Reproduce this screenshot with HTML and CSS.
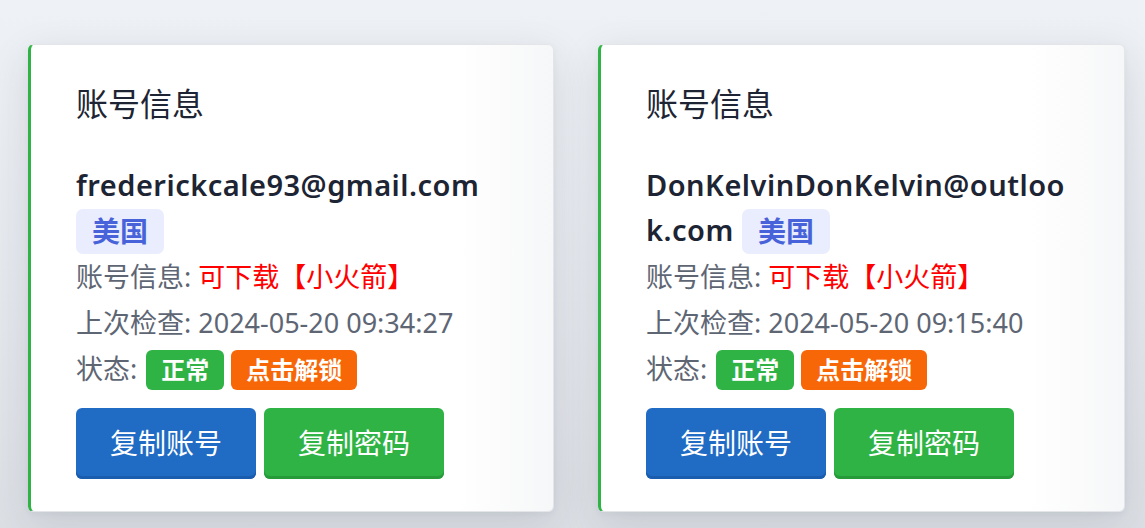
FILE: index.html
```html
<!DOCTYPE html>
<html lang="zh-CN">
<head>
<meta charset="utf-8">
<title>账号信息</title>
<link rel="stylesheet" href="styles.css">
</head>
<body>
<main class="grid">
  <section class="card">
    <h2 class="card-title">账号信息</h2>
    <p class="email">frederickcale93@gmail.com <span class="region">美国</span></p>
    <p class="row">账号信息: <span class="red">可下载【小火箭】</span></p>
    <p class="row">上次检查: 2024-05-20 09:34:27</p>
    <p class="row">状态: <span class="tag tag-green">正常</span> <span class="tag tag-orange">点击解锁</span></p>
    <div class="actions">
      <button class="btn btn-blue">复制账号</button>
      <button class="btn btn-green">复制密码</button>
    </div>
  </section>
  <section class="card">
    <h2 class="card-title">账号信息</h2>
    <p class="email">DonKelvinDonKelvin@outlook.com <span class="region">美国</span></p>
    <p class="row">账号信息: <span class="red">可下载【小火箭】</span></p>
    <p class="row">上次检查: 2024-05-20 09:15:40</p>
    <p class="row">状态: <span class="tag tag-green">正常</span> <span class="tag tag-orange">点击解锁</span></p>
    <div class="actions">
      <button class="btn btn-blue">复制账号</button>
      <button class="btn btn-green">复制密码</button>
    </div>
  </section>
</main>
</body>
</html>
```
FILE: styles.css
```css
* { box-sizing: border-box; }
html, body { height: 100%; }
body {
  margin: 0;
  font-family: "Noto Sans", "Noto Sans CJK SC", sans-serif;
  background: linear-gradient(180deg, #eef1f5 0%, #e4e7ec 60%, #dcdfe4 100%);
  overflow: hidden;
}
.grid {
  display: grid;
  grid-template-columns: 526px 527px;
  column-gap: 44px;
  padding: 44px 20px 0 28px;
  align-items: start;
}
.card {
  background: linear-gradient(90deg, #ffffff 0%, #ffffff 82%, #f6f7f8 100%);
  border: 1px solid #e3e5e9;
  border-left: 3px solid #2fb344;
  border-radius: 6px;
  padding: 40px 45px 32px 45px;
  box-shadow: 0 12px 40px rgba(40, 50, 70, 0.12), 0 2px 6px rgba(40, 50, 70, 0.05);
}
.card-title {
  margin: 0 0 39px;
  font-size: 32px;
  font-weight: 400;
  line-height: 38px;
  color: #1d2433;
}
.email {
  margin: 0;
  font-size: 29px;
  letter-spacing: 0.5px;
  font-weight: 600;
  line-height: 45px;
  color: #1d2433;
  word-break: break-all;
}
.region {
  display: inline-block;
  vertical-align: middle;
  margin-top: -4px;
  padding: 4px 16px;
  line-height: 37px;
  font-size: 28px;
  letter-spacing: 0;
  font-weight: 700;
  color: #4863d9;
  background: #e9edfd;
  border-radius: 7px;
}
.row {
  margin: 0;
  font-size: 27px;
  line-height: 46px;
  color: #5e6674;
}
.red { color: #ff0000; }
.tag {
  display: inline-block;
  vertical-align: middle;
  margin-top: -2px;
  height: 40px;
  line-height: 40px;
  padding: 0 15px;
  font-size: 24px;
  font-weight: 700;
  color: #ffffff;
  border-radius: 6px;
}
.tag-green { background: #2fb344; margin-left: 2px; }
.tag-orange { background: #f76707; }
.actions {
  display: flex;
  gap: 8px;
  margin-top: 16px;
}
.btn {
  font-family: inherit;
  font-size: 28px;
  line-height: 41px;
  padding: 15px 34px;
  border: 0;
  border-radius: 6px;
  color: #ffffff;
  cursor: pointer;
}
.btn-blue { background: #206bc4; box-shadow: inset 0 -3px 0 #1a5cae; }
.btn-green { background: #2fb344; box-shadow: inset 0 -3px 0 #279a3a; }
```
